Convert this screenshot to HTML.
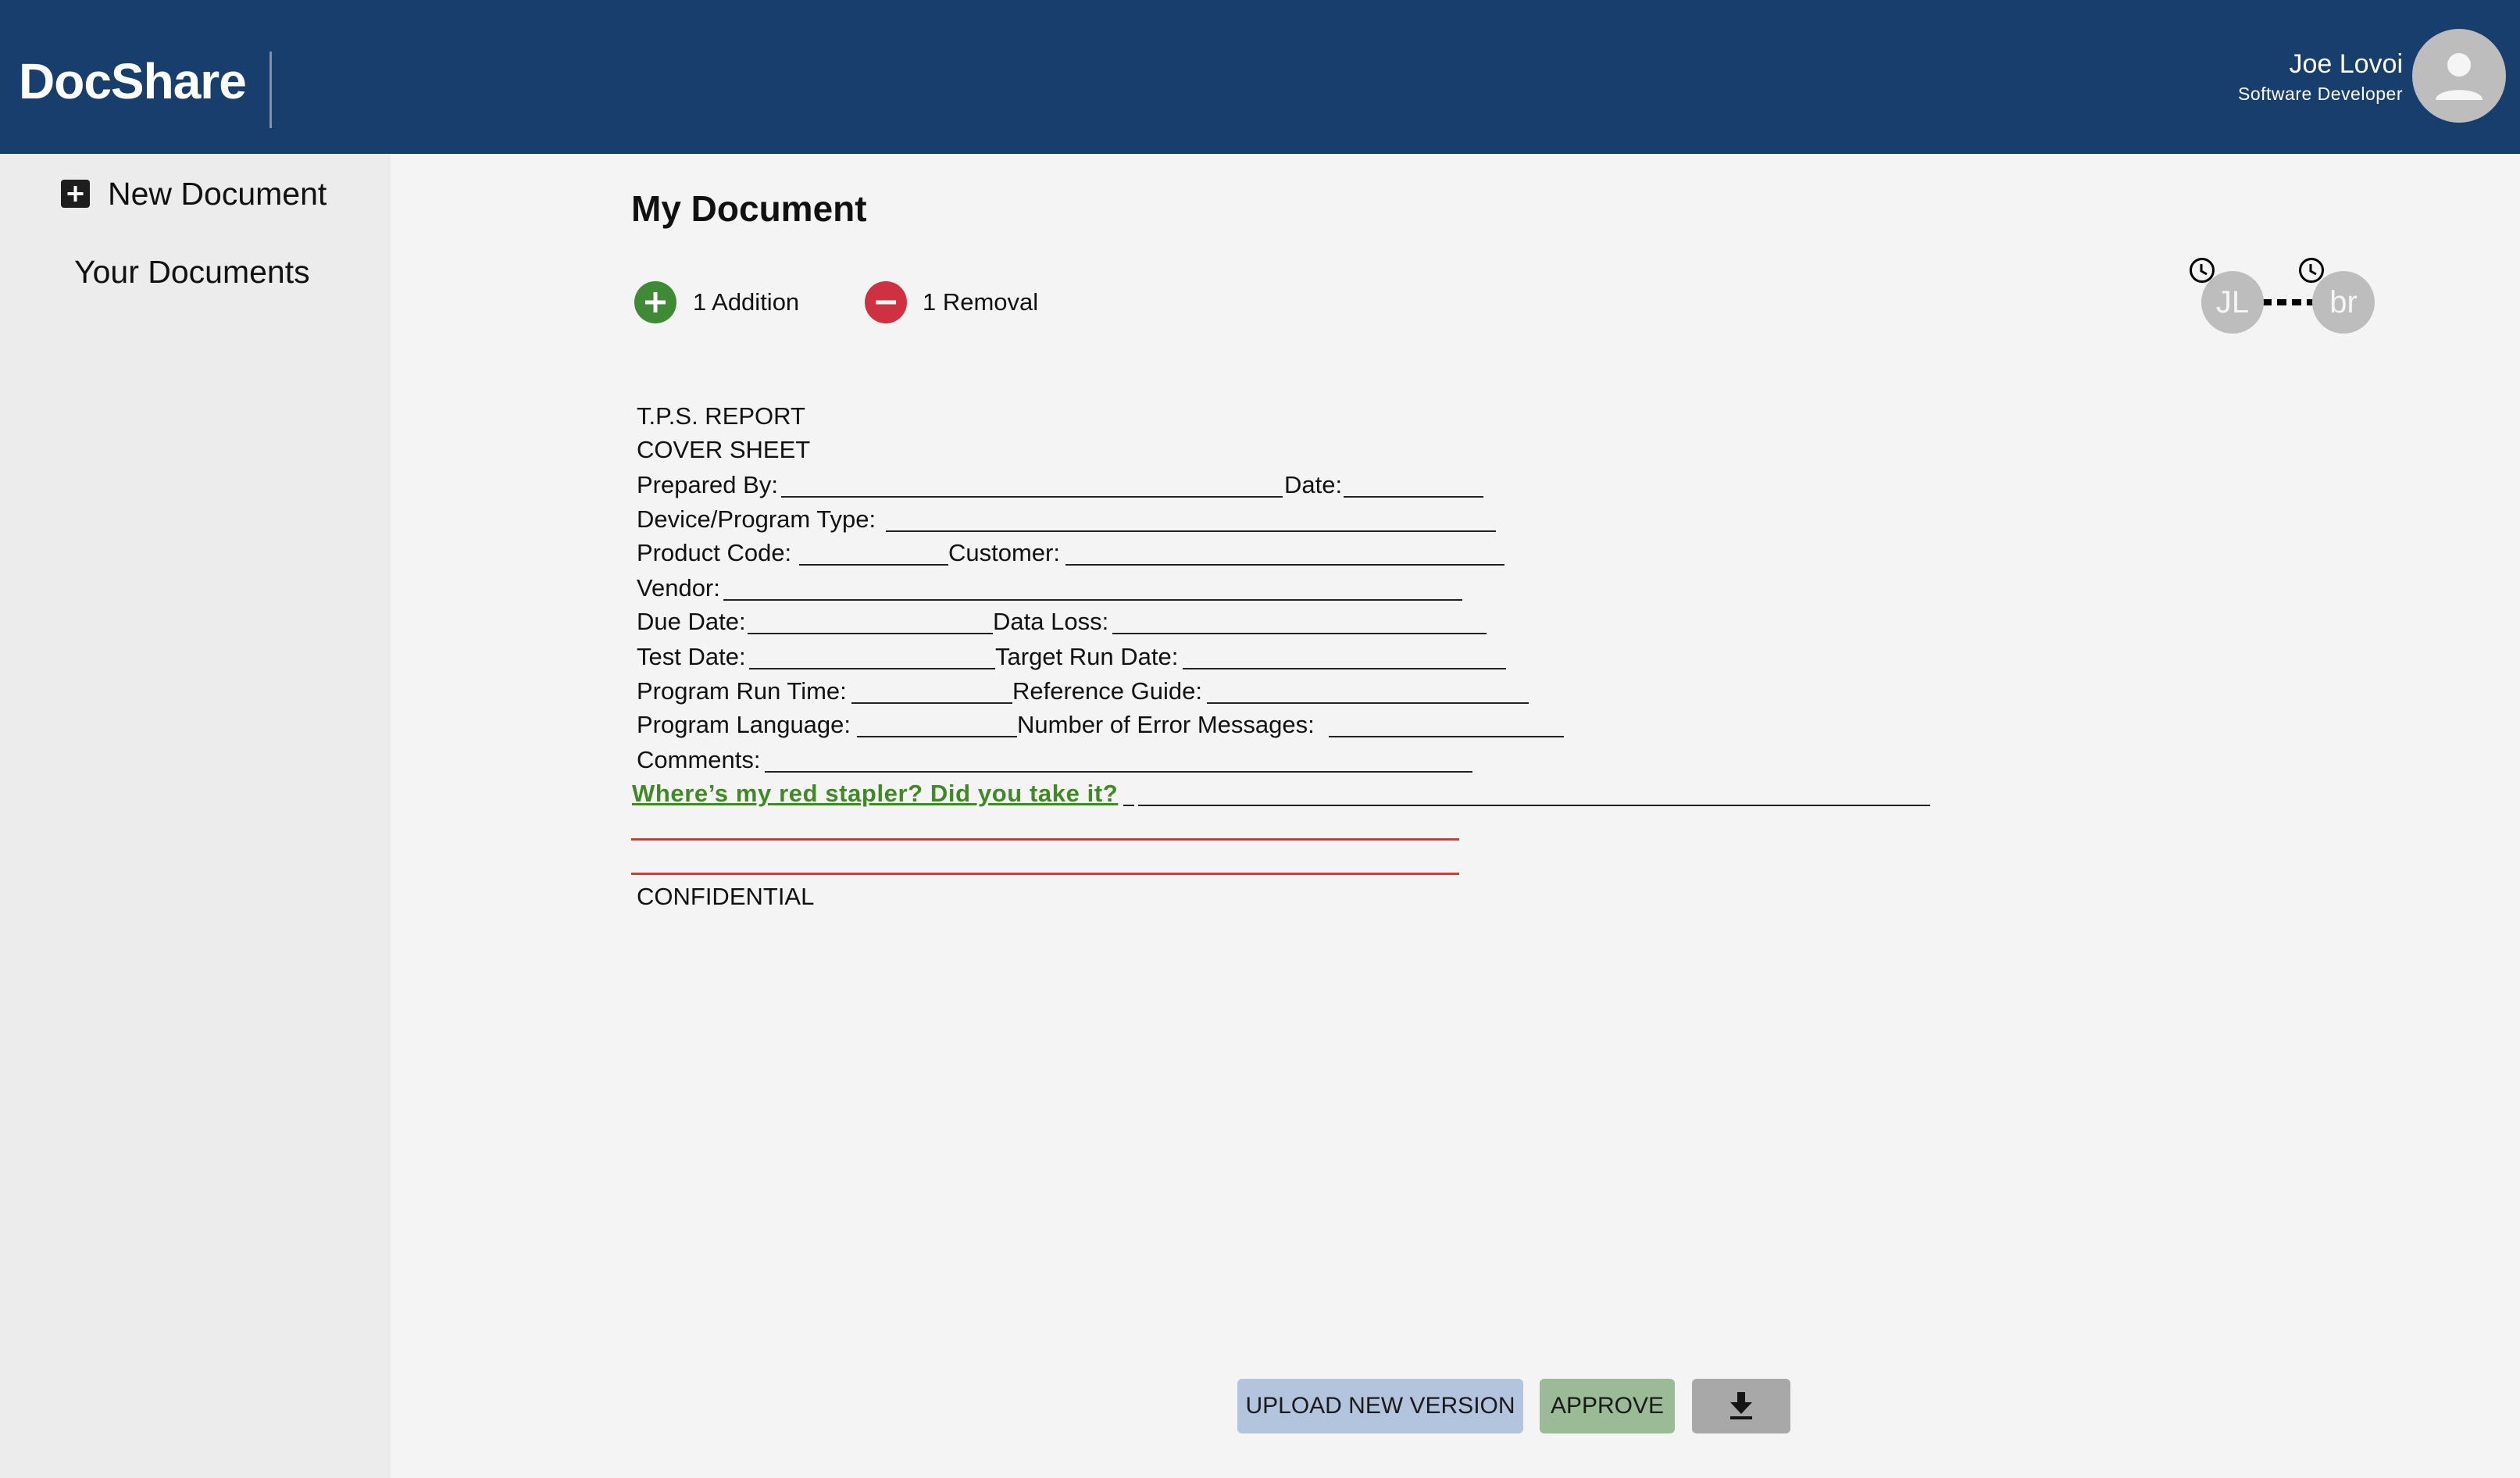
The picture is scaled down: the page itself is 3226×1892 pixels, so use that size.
<!DOCTYPE html>
<html><head><meta charset="utf-8"><style>
*{margin:0;padding:0;box-sizing:border-box}
body{width:3226px;height:1892px;background:#f4f4f4;font-family:"Liberation Sans",Arial,sans-serif;position:relative;overflow:hidden;color:#111}
.hdr{position:absolute;left:0;top:0;width:3226px;height:197px;background:#173e6c}
.logo{position:absolute;left:24px;top:64px;font-size:64px;font-weight:bold;color:#fff;line-height:80px;letter-spacing:-1px}
.sep{position:absolute;left:345px;top:66px;width:3px;height:98px;background:#8a8f98}
.side{position:absolute;left:0;top:197px;width:500px;height:1695px;background:#ececec}
.t{position:absolute;white-space:nowrap}
.ln{position:absolute;height:2px;background:#222}
.r{position:absolute;font-size:31px;line-height:44px;white-space:nowrap;color:#111}
.btn{position:absolute;top:1765px;height:70px;border-radius:6px;font-size:30px;line-height:70px;text-align:center;color:#1a1a1a}
</style></head><body>
<div class="hdr"></div>
<div class="logo">DocShare</div>
<div class="sep"></div>
<div class="t" style="right:150px;top:62px;font-size:34px;color:#fff;line-height:40px">Joe Lovoi</div>
<div class="t" style="right:150px;top:106px;font-size:23px;color:#fff;line-height:28px;letter-spacing:0.5px">Software Developer</div>
<svg style="position:absolute;left:3088px;top:37px" width="120" height="120" viewBox="0 0 120 120">
<circle cx="60" cy="60" r="60" fill="#bdbdbd"/>
<circle cx="60" cy="46" r="15" fill="#f5f5f5"/>
<path d="M30 91 C30 74 90 74 90 91 Z" fill="#f5f5f5"/>
</svg>
<div class="side"></div>
<svg style="position:absolute;left:78px;top:230px" width="37" height="36" viewBox="0 0 37 36"><rect width="37" height="36" rx="4" fill="#1e1e1e"/><rect x="16.5" y="8" width="4" height="20" fill="#fff"/><rect x="8.5" y="16" width="20" height="4" fill="#fff"/></svg>
<div class="t" style="left:138px;top:224px;font-size:41px;line-height:48px;color:#111">New Document</div>
<div class="t" style="left:95px;top:324px;font-size:41px;line-height:48px;color:#111">Your Documents</div>
<div class="t" style="left:808px;top:240px;font-size:46px;font-weight:bold;line-height:54px">My Document</div>
<svg style="position:absolute;left:812px;top:360px" width="54" height="54" viewBox="0 0 54 54"><circle cx="27" cy="27" r="27" fill="#3f8a35"/><rect x="24.5" y="14" width="5" height="26" fill="#fff"/><rect x="14" y="24.5" width="26" height="5" fill="#fff"/></svg>
<div class="t" style="left:887px;top:368px;font-size:31px;line-height:38px">1 Addition</div>
<svg style="position:absolute;left:1107px;top:360px" width="54" height="54" viewBox="0 0 54 54"><circle cx="27" cy="27" r="27" fill="#d03141"/><rect x="14" y="24.5" width="26" height="5" fill="#fff"/></svg>
<div class="t" style="left:1181px;top:368px;font-size:31px;line-height:38px">1 Removal</div>
<!-- timeline -->
<svg style="position:absolute;left:2896px;top:383px" width="70" height="8" viewBox="0 0 70 8"><rect x="0" y="0" width="12" height="8"/><rect x="19" y="0" width="12" height="8"/><rect x="38" y="0" width="12" height="8"/><rect x="57" y="0" width="12" height="8"/></svg>
<div style="position:absolute;left:2818px;top:347px;width:80px;height:80px;border-radius:50%;background:#bdbdbd;color:#f5f5f5;font-size:40px;line-height:80px;text-align:center">JL</div>
<div style="position:absolute;left:2960px;top:347px;width:80px;height:80px;border-radius:50%;background:#bdbdbd;color:#f5f5f5;font-size:40px;line-height:80px;text-align:center">br</div>
<svg style="position:absolute;left:2802px;top:329px" width="34" height="34" viewBox="0 0 34 34"><circle cx="17" cy="17" r="14.5" fill="none" stroke="#000" stroke-width="3"/><path d="M16 9 V18 L23 22" fill="none" stroke="#000" stroke-width="3"/></svg>
<svg style="position:absolute;left:2942px;top:329px" width="34" height="34" viewBox="0 0 34 34"><circle cx="17" cy="17" r="14.5" fill="none" stroke="#000" stroke-width="3"/><path d="M16 9 V18 L23 22" fill="none" stroke="#000" stroke-width="3"/></svg>
<!-- document -->
<div class="r" style="left:815px;top:511px">T.P.S. REPORT</div>
<div class="r" style="left:815px;top:554px">COVER SHEET</div>

<div class="r" style="left:815px;top:599px">Prepared By:</div><div class="ln" style="left:1000px;width:642px;top:635px"></div>
<div class="r" style="left:1644px;top:599px">Date:</div><div class="ln" style="left:1720px;width:179px;top:635px"></div>

<div class="r" style="left:815px;top:643px">Device/Program Type:</div><div class="ln" style="left:1134px;width:781px;top:679px"></div>

<div class="r" style="left:815px;top:686px">Product Code:</div><div class="ln" style="left:1023px;width:191px;top:722px"></div>
<div class="r" style="left:1214px;top:686px">Customer:</div><div class="ln" style="left:1364px;width:562px;top:722px"></div>

<div class="r" style="left:815px;top:731px">Vendor:</div><div class="ln" style="left:926px;width:946px;top:767px"></div>

<div class="r" style="left:815px;top:774px">Due Date:</div><div class="ln" style="left:957px;width:314px;top:810px"></div>
<div class="r" style="left:1271px;top:774px">Data Loss:</div><div class="ln" style="left:1424px;width:479px;top:810px"></div>

<div class="r" style="left:815px;top:819px">Test Date:</div><div class="ln" style="left:959px;width:315px;top:855px"></div>
<div class="r" style="left:1274px;top:819px">Target Run Date:</div><div class="ln" style="left:1514px;width:414px;top:855px"></div>

<div class="r" style="left:815px;top:863px">Program Run Time:</div><div class="ln" style="left:1090px;width:206px;top:899px"></div>
<div class="r" style="left:1296px;top:863px">Reference Guide:</div><div class="ln" style="left:1545px;width:412px;top:899px"></div>

<div class="r" style="left:815px;top:906px">Program Language:</div><div class="ln" style="left:1097px;width:205px;top:942px"></div>
<div class="r" style="left:1302px;top:906px">Number of Error Messages:</div><div class="ln" style="left:1701px;width:301px;top:942px"></div>

<div class="r" style="left:815px;top:951px">Comments:</div><div class="ln" style="left:979px;width:906px;top:987px"></div>

<div class="r" style="left:809px;top:994px;color:#3f8a25;font-weight:bold;text-decoration:underline;letter-spacing:0.6px">Where’s my red stapler? Did you take it?</div>
<div class="ln" style="left:1438px;width:14px;top:1030px"></div>
<div class="ln" style="left:1457px;width:1014px;top:1030px"></div>

<div style="position:absolute;left:808px;top:1073px;width:1060px;height:3px;background:#e8332a"></div>
<div style="position:absolute;left:808px;top:1117px;width:1060px;height:3px;background:#e8332a"></div>

<div class="r" style="left:815px;top:1126px">CONFIDENTIAL</div>

<div class="btn" style="left:1584px;width:366px;background:#b3c4de">UPLOAD NEW VERSION</div>
<div class="btn" style="left:1971px;width:173px;background:#9bbb96">APPROVE</div>
<div class="btn" style="left:2166px;width:126px;background:#a8a8a8">
<svg style="position:absolute;left:47px;top:17px" width="32" height="36" viewBox="0 0 32 36"><rect x="11" y="0" width="10" height="14" fill="#151515"/><path d="M2 13 H30 L16 28 Z" fill="#151515"/><rect x="2" y="31" width="28" height="4" fill="#151515"/></svg>
</div>
</body></html>
